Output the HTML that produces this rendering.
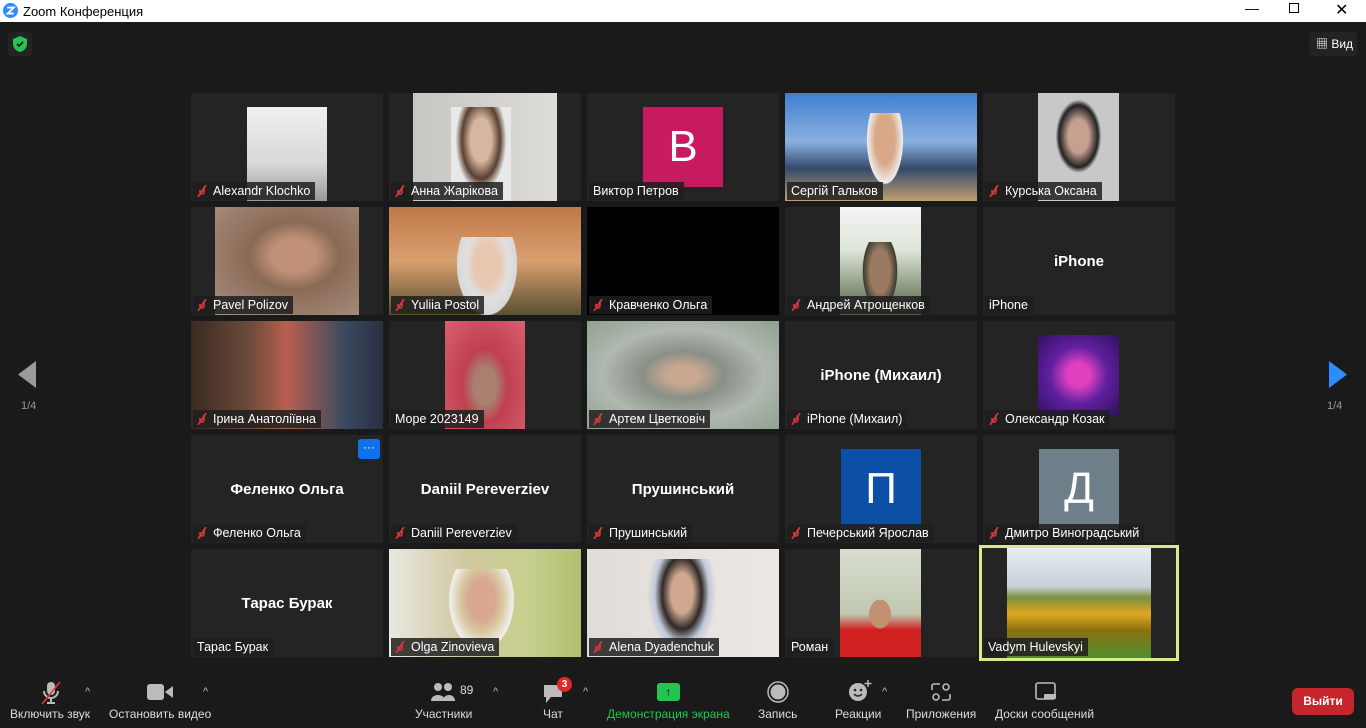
<!DOCTYPE html>
<html><head><meta charset="utf-8"><style>
*{margin:0;padding:0;box-sizing:border-box}
body{width:1366px;height:728px;background:#1a1a1a;font-family:"Liberation Sans","Noto Sans CJK SC",sans-serif;position:relative;overflow:hidden;color:#fff}
.tb{position:absolute;left:0;top:0;width:1366px;height:22px;background:#fff;color:#000;font-size:13px}
.t{position:absolute;width:192px;height:108px;background:#242424;overflow:hidden}
.im{position:absolute;top:0;height:108px}
.lb{position:absolute;left:2px;bottom:1px;height:18px;background:rgba(30,30,30,.85);font-size:12.5px;line-height:18px;padding:0 5px 0 4px;white-space:nowrap;display:flex;align-items:center}
.lb svg{margin-right:6px}
.ct{position:absolute;left:0;right:0;top:46px;text-align:center;font-weight:bold;font-size:15px}
.av{position:absolute;top:14px;width:80px;height:80px;font-size:44px;text-align:center;line-height:80px;color:#fff}
.bt{position:absolute;top:680px;text-align:center;font-size:12px;color:#ddd}
.car{position:absolute;top:686px;color:#bbb;font-size:11px}
</style></head><body>
<div class="tb">
<svg style="position:absolute;left:3px;top:3px" width="15" height="15" viewBox="0 0 16 16"><circle cx="8" cy="8" r="8" fill="#2d8cff"/><path d="M4.5 4.8h7L5 11.2h6.5" stroke="#fff" stroke-width="2" fill="none"/></svg>
<span style="position:absolute;left:23px;top:4px">Zoom Конференция</span>
<span style="position:absolute;left:1245px;top:0px;font-size:14px">&#8212;</span>
<span style="position:absolute;left:1289px;top:3px;width:10px;height:10px;border:1px solid #000;"></span>
<span style="position:absolute;left:1335px;top:0px;font-size:16px">✕</span>
</div>
<div style="position:absolute;left:8px;top:32px;width:24px;height:24px;background:#232323;border-radius:4px"></div>
<svg style="position:absolute;left:13px;top:36px" width="14" height="16" viewBox="0 0 14 16"><path d="M7 0L14 3v5c0 4-3 7-7 8C3 15 0 12 0 8V3z" fill="#23c552"/><path d="M4 8l2 2 4-4" stroke="#111" stroke-width="1.6" fill="none"/></svg>
<div style="position:absolute;left:1309px;top:32px;width:48px;height:24px;background:#232323;border-radius:4px;font-size:12px;line-height:24px;padding-left:7px">▦ Вид</div>

<svg style="position:absolute;left:18px;top:361px" width="18" height="27"><path d="M18 0v27L0 13.5z" fill="#9a9a9a"/></svg>
<div style="position:absolute;left:21px;top:400px;font-size:11px;color:#999">1/4</div>
<svg style="position:absolute;left:1329px;top:361px" width="18" height="27"><path d="M0 0v27l18-13.5z" fill="#2d8cff"/></svg>
<div style="position:absolute;left:1327px;top:400px;font-size:11px;color:#999">1/4</div>

<!-- Row 1 -->
<div class="t" style="left:191px;top:93px"><div class="im" style="left:56px;top:14px;width:80px;height:94px;background:linear-gradient(#f0f0f0,#d8d8d8 60%,#9a9a9a)"></div><div class="lb"><svg width="10" height="12"><path d="M1 12L9 0M3 5v2a2 2 0 004 0V2" stroke="#e0363a" stroke-width="1.6" fill="none"/></svg>Alexandr Klochko</div></div>
<div class="t" style="left:389px;top:93px"><div class="im" style="left:24px;width:144px;background:linear-gradient(90deg,#c8c6c2,#dedcd8);"></div><div class="im" style="left:62px;top:14px;width:60px;height:94px;background:radial-gradient(ellipse at 50% 35%,#d6b6a0 25%,#5a3f30 45%,#e8e8e8 60%)"></div><div class="lb"><svg width="10" height="12"><path d="M1 12L9 0M3 5v2a2 2 0 004 0V2" stroke="#e0363a" stroke-width="1.6" fill="none"/></svg>Анна Жарікова</div></div>
<div class="t" style="left:587px;top:93px"><div class="av" style="left:56px;background:#c81a5f">B</div><div class="lb">Виктор Петров</div></div>
<div class="t" style="left:785px;top:93px"><div class="im" style="left:0;width:192px;background:linear-gradient(#3f7fd0,#8ab0e0 45%,#344a6a 70%,#c0a070)"></div><div class="im" style="left:75px;top:20px;width:50px;height:88px;background:radial-gradient(ellipse at 50% 30%,#d8a888 28%,#eeeeee 50%,transparent 52%)"></div><div class="lb">Сергій Гальков</div></div>
<div class="t" style="left:983px;top:93px"><div class="im" style="left:55px;width:81px;background:radial-gradient(ellipse at 50% 40%,#c8a090 18%,#222 34%,#c8c8c8 40%)"></div><div class="lb"><svg width="10" height="12"><path d="M1 12L9 0M3 5v2a2 2 0 004 0V2" stroke="#e0363a" stroke-width="1.6" fill="none"/></svg>Курська Оксана</div></div>
<!-- Row 2 -->
<div class="t" style="left:191px;top:207px"><div class="im" style="left:24px;width:144px;background:radial-gradient(ellipse at 55% 45%,#c09078 20%,#8a6a55 40%,#a89080)"></div><div class="lb"><svg width="10" height="12"><path d="M1 12L9 0M3 5v2a2 2 0 004 0V2" stroke="#e0363a" stroke-width="1.6" fill="none"/></svg>Pavel Polizov</div></div>
<div class="t" style="left:389px;top:207px"><div class="im" style="left:0;width:192px;background:linear-gradient(#c07848,#d8a070 50%,#5a5030)"></div><div class="im" style="left:68px;top:30px;width:60px;height:78px;background:radial-gradient(ellipse at 50% 35%,#e8c8b0 30%,#e0e0e0 50%,#d8d8d8 70%,transparent 72%)"></div><div class="lb"><svg width="10" height="12"><path d="M1 12L9 0M3 5v2a2 2 0 004 0V2" stroke="#e0363a" stroke-width="1.6" fill="none"/></svg>Yuliia Postol</div></div>
<div class="t" style="left:587px;top:207px;background:#000"><div class="lb"><svg width="10" height="12"><path d="M1 12L9 0M3 5v2a2 2 0 004 0V2" stroke="#e0363a" stroke-width="1.6" fill="none"/></svg>Кравченко Ольга</div></div>
<div class="t" style="left:785px;top:207px"><div class="im" style="left:55px;width:81px;background:linear-gradient(#f4f4f4,#dde5d8 40%,#506040)"></div><div class="im" style="left:75px;top:35px;width:40px;height:73px;background:radial-gradient(ellipse at 50% 40%,#9a7a60 35%,#3a3a30 60%,transparent 62%)"></div><div class="lb"><svg width="10" height="12"><path d="M1 12L9 0M3 5v2a2 2 0 004 0V2" stroke="#e0363a" stroke-width="1.6" fill="none"/></svg>Андрей Атрощенков</div></div>
<div class="t" style="left:983px;top:207px"><div class="ct">iPhone</div><div class="lb">iPhone</div></div>
<!-- Row 3 -->
<div class="t" style="left:191px;top:321px"><div class="im" style="left:0;width:192px;background:linear-gradient(90deg,#3a2a20,#6a4a3a 30%,#b86050 50%,#3a4a60 80%,#2a3040)"></div><div class="lb"><svg width="10" height="12"><path d="M1 12L9 0M3 5v2a2 2 0 004 0V2" stroke="#e0363a" stroke-width="1.6" fill="none"/></svg>Ірина Анатоліївна</div></div>
<div class="t" style="left:389px;top:321px"><div class="im" style="left:56px;width:80px;background:radial-gradient(ellipse at 50% 60%,#a88070 20%,#c04050 40%,#d86070)"></div><div class="lb">Море 2023149</div></div>
<div class="t" style="left:587px;top:321px"><div class="im" style="left:0;width:192px;background:radial-gradient(ellipse at 50% 50%,#c8a890 12%,#8a9088 30%,#b0b8b0 60%,#90a090)"></div><div class="lb"><svg width="10" height="12"><path d="M1 12L9 0M3 5v2a2 2 0 004 0V2" stroke="#e0363a" stroke-width="1.6" fill="none"/></svg>Артем Цветковіч</div></div>
<div class="t" style="left:785px;top:321px"><div class="ct">iPhone (Михаил)</div><div class="lb"><svg width="10" height="12"><path d="M1 12L9 0M3 5v2a2 2 0 004 0V2" stroke="#e0363a" stroke-width="1.6" fill="none"/></svg>iPhone (Михаил)</div></div>
<div class="t" style="left:983px;top:321px"><div class="im" style="left:55px;top:14px;width:81px;height:80px;background:radial-gradient(circle,#e040c0 20%,#6020a0 50%,#301060)"></div><div class="lb"><svg width="10" height="12"><path d="M1 12L9 0M3 5v2a2 2 0 004 0V2" stroke="#e0363a" stroke-width="1.6" fill="none"/></svg>Олександр Козак</div></div>
<!-- Row 4 -->
<div class="t" style="left:191px;top:435px"><div style="position:absolute;left:167px;top:4px;width:22px;height:20px;background:#0e72ed;border-radius:3px;font-size:12px;text-align:center;line-height:16px">···</div><div class="ct">Феленко Ольга</div><div class="lb"><svg width="10" height="12"><path d="M1 12L9 0M3 5v2a2 2 0 004 0V2" stroke="#e0363a" stroke-width="1.6" fill="none"/></svg>Феленко Ольга</div></div>
<div class="t" style="left:389px;top:435px"><div class="ct">Daniil Pereverziev</div><div class="lb"><svg width="10" height="12"><path d="M1 12L9 0M3 5v2a2 2 0 004 0V2" stroke="#e0363a" stroke-width="1.6" fill="none"/></svg>Daniil Pereverziev</div></div>
<div class="t" style="left:587px;top:435px"><div class="ct">Прушинський</div><div class="lb"><svg width="10" height="12"><path d="M1 12L9 0M3 5v2a2 2 0 004 0V2" stroke="#e0363a" stroke-width="1.6" fill="none"/></svg>Прушинський</div></div>
<div class="t" style="left:785px;top:435px"><div class="av" style="left:56px;background:#0c4fa6">П</div><div class="lb"><svg width="10" height="12"><path d="M1 12L9 0M3 5v2a2 2 0 004 0V2" stroke="#e0363a" stroke-width="1.6" fill="none"/></svg>Печерський Ярослав</div></div>
<div class="t" style="left:983px;top:435px"><div class="av" style="left:56px;background:#6f7f8a">Д</div><div class="lb"><svg width="10" height="12"><path d="M1 12L9 0M3 5v2a2 2 0 004 0V2" stroke="#e0363a" stroke-width="1.6" fill="none"/></svg>Дмитро Виноградський</div></div>
<!-- Row 5 -->
<div class="t" style="left:191px;top:549px"><div class="ct">Тарас Бурак</div><div class="lb">Тарас Бурак</div></div>
<div class="t" style="left:389px;top:549px"><div class="im" style="left:0;width:192px;background:linear-gradient(90deg,#e8e8e0,#d0c8a0 40%,#c8d090 70%,#b0c070)"></div><div class="im" style="left:55px;top:20px;width:75px;height:88px;background:radial-gradient(ellipse at 50% 35%,#d8a890 25%,#d8c8a0 40%,#f0f0f0 60%,transparent 62%)"></div><div class="lb"><svg width="10" height="12"><path d="M1 12L9 0M3 5v2a2 2 0 004 0V2" stroke="#e0363a" stroke-width="1.6" fill="none"/></svg>Olga Zinovieva</div></div>
<div class="t" style="left:587px;top:549px"><div class="im" style="left:0;width:192px;background:linear-gradient(90deg,#e0dcd8,#ece8e4)"></div><div class="im" style="left:60px;top:10px;width:70px;height:98px;background:radial-gradient(ellipse at 50% 35%,#d0a890 22%,#302828 40%,#c0c8d8 55%,transparent 70%)"></div><div class="lb"><svg width="10" height="12"><path d="M1 12L9 0M3 5v2a2 2 0 004 0V2" stroke="#e0363a" stroke-width="1.6" fill="none"/></svg>Alena Dyadenchuk</div></div>
<div class="t" style="left:785px;top:549px"><div class="im" style="left:55px;width:81px;background:linear-gradient(#d8ddd0,#c0c8b0 60%,#d02020 75%)"></div><div class="im" style="left:80px;top:45px;width:30px;height:40px;background:radial-gradient(ellipse,#c09070 50%,transparent 52%)"></div><div class="lb">Роман</div></div>
<div class="t" style="left:979px;top:545px;width:200px;height:116px;border:3px solid #dde88a;background:#242424"><div class="im" style="left:25px;top:0;width:144px;height:110px;background:linear-gradient(#e8eef2,#c8d0d8 35%,#7a9040 45%,#e0a820 60%,#8a7010 75%,#509030)"></div><div class="lb" style="left:2px;bottom:2px">Vadym Hulevskyi</div></div>

<!-- toolbar -->
<svg style="position:absolute;left:40px;top:681px" width="22" height="24" viewBox="0 0 22 24"><rect x="7" y="1" width="8" height="13" rx="4" fill="#bbb"/><path d="M4 10a7 7 0 0014 0M11 17v5M7 22h8" stroke="#bbb" stroke-width="2" fill="none"/><path d="M2 23L20 1" stroke="#e0363a" stroke-width="1.6"/></svg>
<div class="car" style="left:85px">^</div>
<div class="bt" style="left:10px;top:707px">Включить звук</div>
<svg style="position:absolute;left:147px;top:684px" width="26" height="16"><rect x="0" y="0" width="17" height="16" rx="3" fill="#bbb"/><path d="M18 8l8-6v12z" fill="#bbb"/></svg>
<div class="car" style="left:203px">^</div>
<div class="bt" style="left:109px;top:707px">Остановить видео</div>
<svg style="position:absolute;left:431px;top:682px" width="24" height="20"><circle cx="7" cy="5" r="4" fill="#bbb"/><circle cx="17" cy="5" r="4" fill="#bbb"/><path d="M0 19c0-8 14-8 14 0zM12 19c0-8 12-8 12 0z" fill="#bbb"/></svg>
<div style="position:absolute;left:460px;top:683px;font-size:12px;color:#ddd">89</div>
<div class="car" style="left:493px">^</div>
<div class="bt" style="left:415px;top:707px">Участники</div>
<svg style="position:absolute;left:542px;top:683px" width="22" height="22"><path d="M2 2h18v12H9l-5 6v-6H2z" fill="#bbb"/></svg>
<div style="position:absolute;left:557px;top:677px;width:15px;height:15px;border-radius:8px;background:#e02828;font-size:10px;text-align:center;line-height:15px;font-weight:bold">3</div>
<div class="car" style="left:583px">^</div>
<div class="bt" style="left:543px;top:707px">Чат</div>
<div style="position:absolute;left:657px;top:683px;width:23px;height:18px;background:#23c552;border-radius:3px;text-align:center;font-size:12px;line-height:18px;color:#111;font-weight:bold">↑</div>
<div class="bt" style="left:607px;top:707px;color:#23c552">Демонстрация экрана</div>
<svg style="position:absolute;left:767px;top:681px" width="22" height="22"><circle cx="11" cy="11" r="10" fill="none" stroke="#bbb" stroke-width="1.5"/><circle cx="11" cy="11" r="7.5" fill="#bbb"/></svg>
<div class="bt" style="left:758px;top:707px">Запись</div>
<svg style="position:absolute;left:848px;top:680px" width="24" height="22"><circle cx="10" cy="12" r="9" fill="#bbb"/><circle cx="7" cy="10" r="1.3" fill="#222"/><circle cx="13" cy="10" r="1.3" fill="#222"/><path d="M6 14q4 4 8 0" stroke="#222" stroke-width="1.5" fill="none"/><path d="M20 0v7M16.5 3.5h7" stroke="#bbb" stroke-width="1.5"/></svg>
<div class="car" style="left:882px">^</div>
<div class="bt" style="left:835px;top:707px">Реакции</div>
<svg style="position:absolute;left:931px;top:682px" width="20" height="20"><path d="M9 2H3a2 2 0 00-2 2v4M11 18h6a2 2 0 002-2v-4" stroke="#bbb" stroke-width="1.6" fill="none"/><circle cx="15" cy="5" r="3" fill="none" stroke="#bbb" stroke-width="1.6"/><circle cx="5" cy="15" r="3" fill="none" stroke="#bbb" stroke-width="1.6"/></svg>
<div class="bt" style="left:906px;top:707px">Приложения</div>
<svg style="position:absolute;left:1035px;top:682px" width="22" height="20"><rect x="1" y="1" width="19" height="16" rx="2" fill="none" stroke="#bbb" stroke-width="1.6"/><rect x="9" y="12" width="12" height="5" rx="1" fill="#bbb"/></svg>
<div class="bt" style="left:995px;top:707px">Доски сообщений</div>
<div style="position:absolute;left:1292px;top:688px;width:62px;height:27px;background:#c6252b;border-radius:6px;font-size:12px;font-weight:bold;text-align:center;line-height:27px">Выйти</div>
</body></html>
